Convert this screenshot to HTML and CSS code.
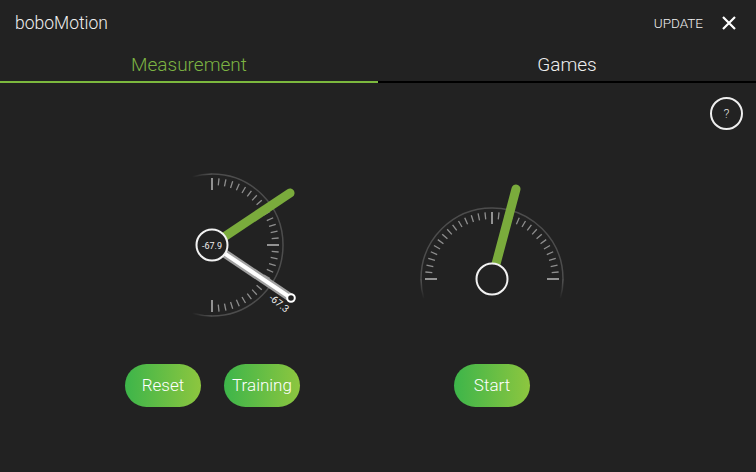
FILE: index.html
```html
<!DOCTYPE html>
<html lang="en">
<head>
    <meta charset="UTF-8">
    <meta name="viewport" content="width=device-width, initial-scale=1.0">
    <title>boboMotion</title>
    <link rel="stylesheet" href="styles.css">
</head>
<body>
    <div class="app">
        <!-- Title bar -->
        <header class="topbar">
            <span class="brand">boboMotion</span>
            <div class="topbar-actions">
                <span class="update">UPDATE</span>
                <svg class="close" width="14" height="14" viewBox="0 0 14 14">
                    <path d="M1 1L13 13M13 1L1 13" stroke="#fff" stroke-width="2.2" fill="none"/>
                </svg>
            </div>
        </header>

        <!-- Tabs -->
        <nav class="tabs">
            <div class="tab active">Measurement</div>
            <div class="tab">Games</div>
        </nav>

        <main class="content">
            <div class="help-row">
                <div class="help">?</div>
            </div>

            <div class="panels">
                <!-- Measurement gauge -->
                <section class="panel">
                    <svg class="gauge" width="181" height="190" viewBox="0 0 181 190">
                        <defs>
                            <linearGradient id="arcFade" gradientUnits="userSpaceOnUse" x1="0" y1="0" x2="0" y2="20">
                                <stop offset="0" stop-color="#555"/>
                                <stop offset="1" stop-color="#555" stop-opacity="0"/>
                            </linearGradient>
                        </defs>
                        <g class="dial" transform="translate(90 95) rotate(90)"></g>
                        <line class="needle" x1="90" y1="95" x2="168" y2="43"/>
                        <line class="needle-white-edge" x1="90" y1="95" x2="169" y2="148"/>
                        <line class="needle-white" x1="90" y1="95" x2="169" y2="148"/>
                        <circle class="needle-tip" cx="169" cy="148" r="3.8"/>
                        <circle class="hub" cx="90" cy="95" r="15.5"/>
                        <text class="hub-value" x="90" y="98.5">-67.9</text>
                        <text class="tip-value" transform="translate(155 156) rotate(38)">-67.3</text>
                    </svg>
                    <div class="buttons">
                        <button class="pill">Reset</button>
                        <button class="pill">Training</button>
                    </div>
                </section>

                <!-- Games gauge -->
                <section class="panel panel-start">
                    <svg class="gauge" width="180" height="190" viewBox="0 0 180 190">
                        <g class="dial" transform="translate(90 129)"></g>
                        <line class="needle" x1="90" y1="129" x2="114" y2="39"/>
                        <circle class="hub" cx="90" cy="129" r="15.5"/>
                    </svg>
                    <div class="buttons">
                        <button class="pill">Start</button>
                    </div>
                </section>
            </div>
        </main>
    </div>

    <script src="gauge.js"></script>
</body>
</html>
```

FILE: styles.css
```css
html, body {
    margin: 0;
    padding: 0;
}
body {
    font-family: Roboto, "Liberation Sans", sans-serif;
    font-weight: 300;
    background: #222222;
    color: #fff;
}
.app {
    width: 756px;
    height: 472px;
    overflow: hidden;
    background: #222222;
}
.topbar {
    display: flex;
    justify-content: space-between;
    align-items: center;
    height: 45px;
    padding: 0 20px 0 15px;
}
.brand {
    font-size: 17.5px;
    color: #f0f0f0;
}
.topbar-actions {
    display: flex;
    align-items: center;
    gap: 19px;
}
.update {
    font-size: 13.5px;
    color: #f0f0f0;
}
.close {
    display: block;
}
.tabs {
    display: flex;
}
.tab {
    flex: 1;
    height: 34px;
    padding-top: 2px;
    line-height: 35px;
    text-align: center;
    font-size: 19px;
    color: #eee;
    border-bottom: 2px solid #000;
}
.tab.active {
    color: #7cb342;
    border-bottom: 2px solid #7cb93e;
}
.help-row {
    display: flex;
    justify-content: flex-end;
    padding: 14px 13px 0 0;
}
.help {
    width: 29px;
    height: 29px;
    line-height: 29px;
    text-align: center;
    border: 2px solid #eee;
    border-radius: 50%;
    font-size: 13px;
    color: #ddd;
}
.panels {
    display: flex;
    gap: 154px;
    padding-left: 125px;
    margin-top: 20px;
}
.panel {
    display: flex;
    flex-direction: column;
    align-items: center;
    width: 175px;
}
.panel-start {
    width: 76px;
}
.gauge {
    display: block;
    flex-shrink: 0;
    overflow: visible;
}
.buttons {
    display: flex;
    gap: 23px;
    margin-top: 24px;
}
.pill {
    width: 76px;
    height: 43px;
    padding: 0 0 2px;
    border: none;
    border-radius: 22px;
    background: linear-gradient(90deg, #3db54a, #8dc63f);
    color: #fff;
    font-family: inherit;
    font-weight: 300;
    font-size: 17px;
    white-space: nowrap;
}
.arc {
    fill: none;
    stroke: url(#arcFade);
    stroke-width: 1.5;
}
.arc-main {
    fill: none;
    stroke: #4d4d4d;
    stroke-width: 1.5;
}
.tick {
    stroke: #8f8f8f;
    stroke-width: 1.3;
}
.tick-long {
    stroke: #b0b0b0;
    stroke-width: 1.6;
}
.needle {
    stroke: #7aab3c;
    stroke-width: 9;
    stroke-linecap: round;
}
.needle-white-edge {
    stroke: #a0a0a0;
    stroke-width: 8.5;
}
.needle-white {
    stroke: #fff;
    stroke-width: 4;
}
.needle-tip {
    fill: #222;
    stroke: #fff;
    stroke-width: 2;
}
.hub {
    fill: #222;
    stroke: #f2f2f2;
    stroke-width: 2;
}
.hub-value {
    fill: #eee;
    font-size: 9px;
    font-weight: 400;
    text-anchor: middle;
}
.tip-value {
    fill: #eee;
    font-size: 10px;
    font-weight: 400;
    text-anchor: middle;
}
```

FILE: gauge.js
```js
// Draw the arc and ticks of each dial. Angles are from straight up, in degrees.
const SVG_NS = 'http://www.w3.org/2000/svg';

function point(radius, deg) {
    const rad = deg * Math.PI / 180;
    return [radius * Math.sin(rad), -radius * Math.cos(rad)];
}

function addEl(parent, name, attrs) {
    const el = document.createElementNS(SVG_NS, name);
    Object.keys(attrs).forEach(function(key) {
        el.setAttribute(key, attrs[key]);
    });
    parent.appendChild(el);
}

function arcPath(radius, from, to) {
    const a = point(radius, from);
    const b = point(radius, to);
    return `M${a[0]} ${a[1]}A${radius} ${radius} 0 0 1 ${b[0]} ${b[1]}`;
}

document.querySelectorAll('.dial').forEach(function(dial) {
    addEl(dial, 'path', { class: 'arc-main', d: arcPath(71, -90, 90) });
    addEl(dial, 'path', { class: 'arc', d: arcPath(71, -106, -90) });
    addEl(dial, 'path', { class: 'arc', d: arcPath(71, 90, 106) });

    for (let deg = -90; deg <= 90; deg += 6) {
        const long = deg % 90 === 0;
        const a = point(long ? 55 : 60, deg);
        const b = point(67, deg);
        addEl(dial, 'line', {
            class: long ? 'tick tick-long' : 'tick',
            x1: a[0], y1: a[1], x2: b[0], y2: b[1]
        });
    }
});
```
